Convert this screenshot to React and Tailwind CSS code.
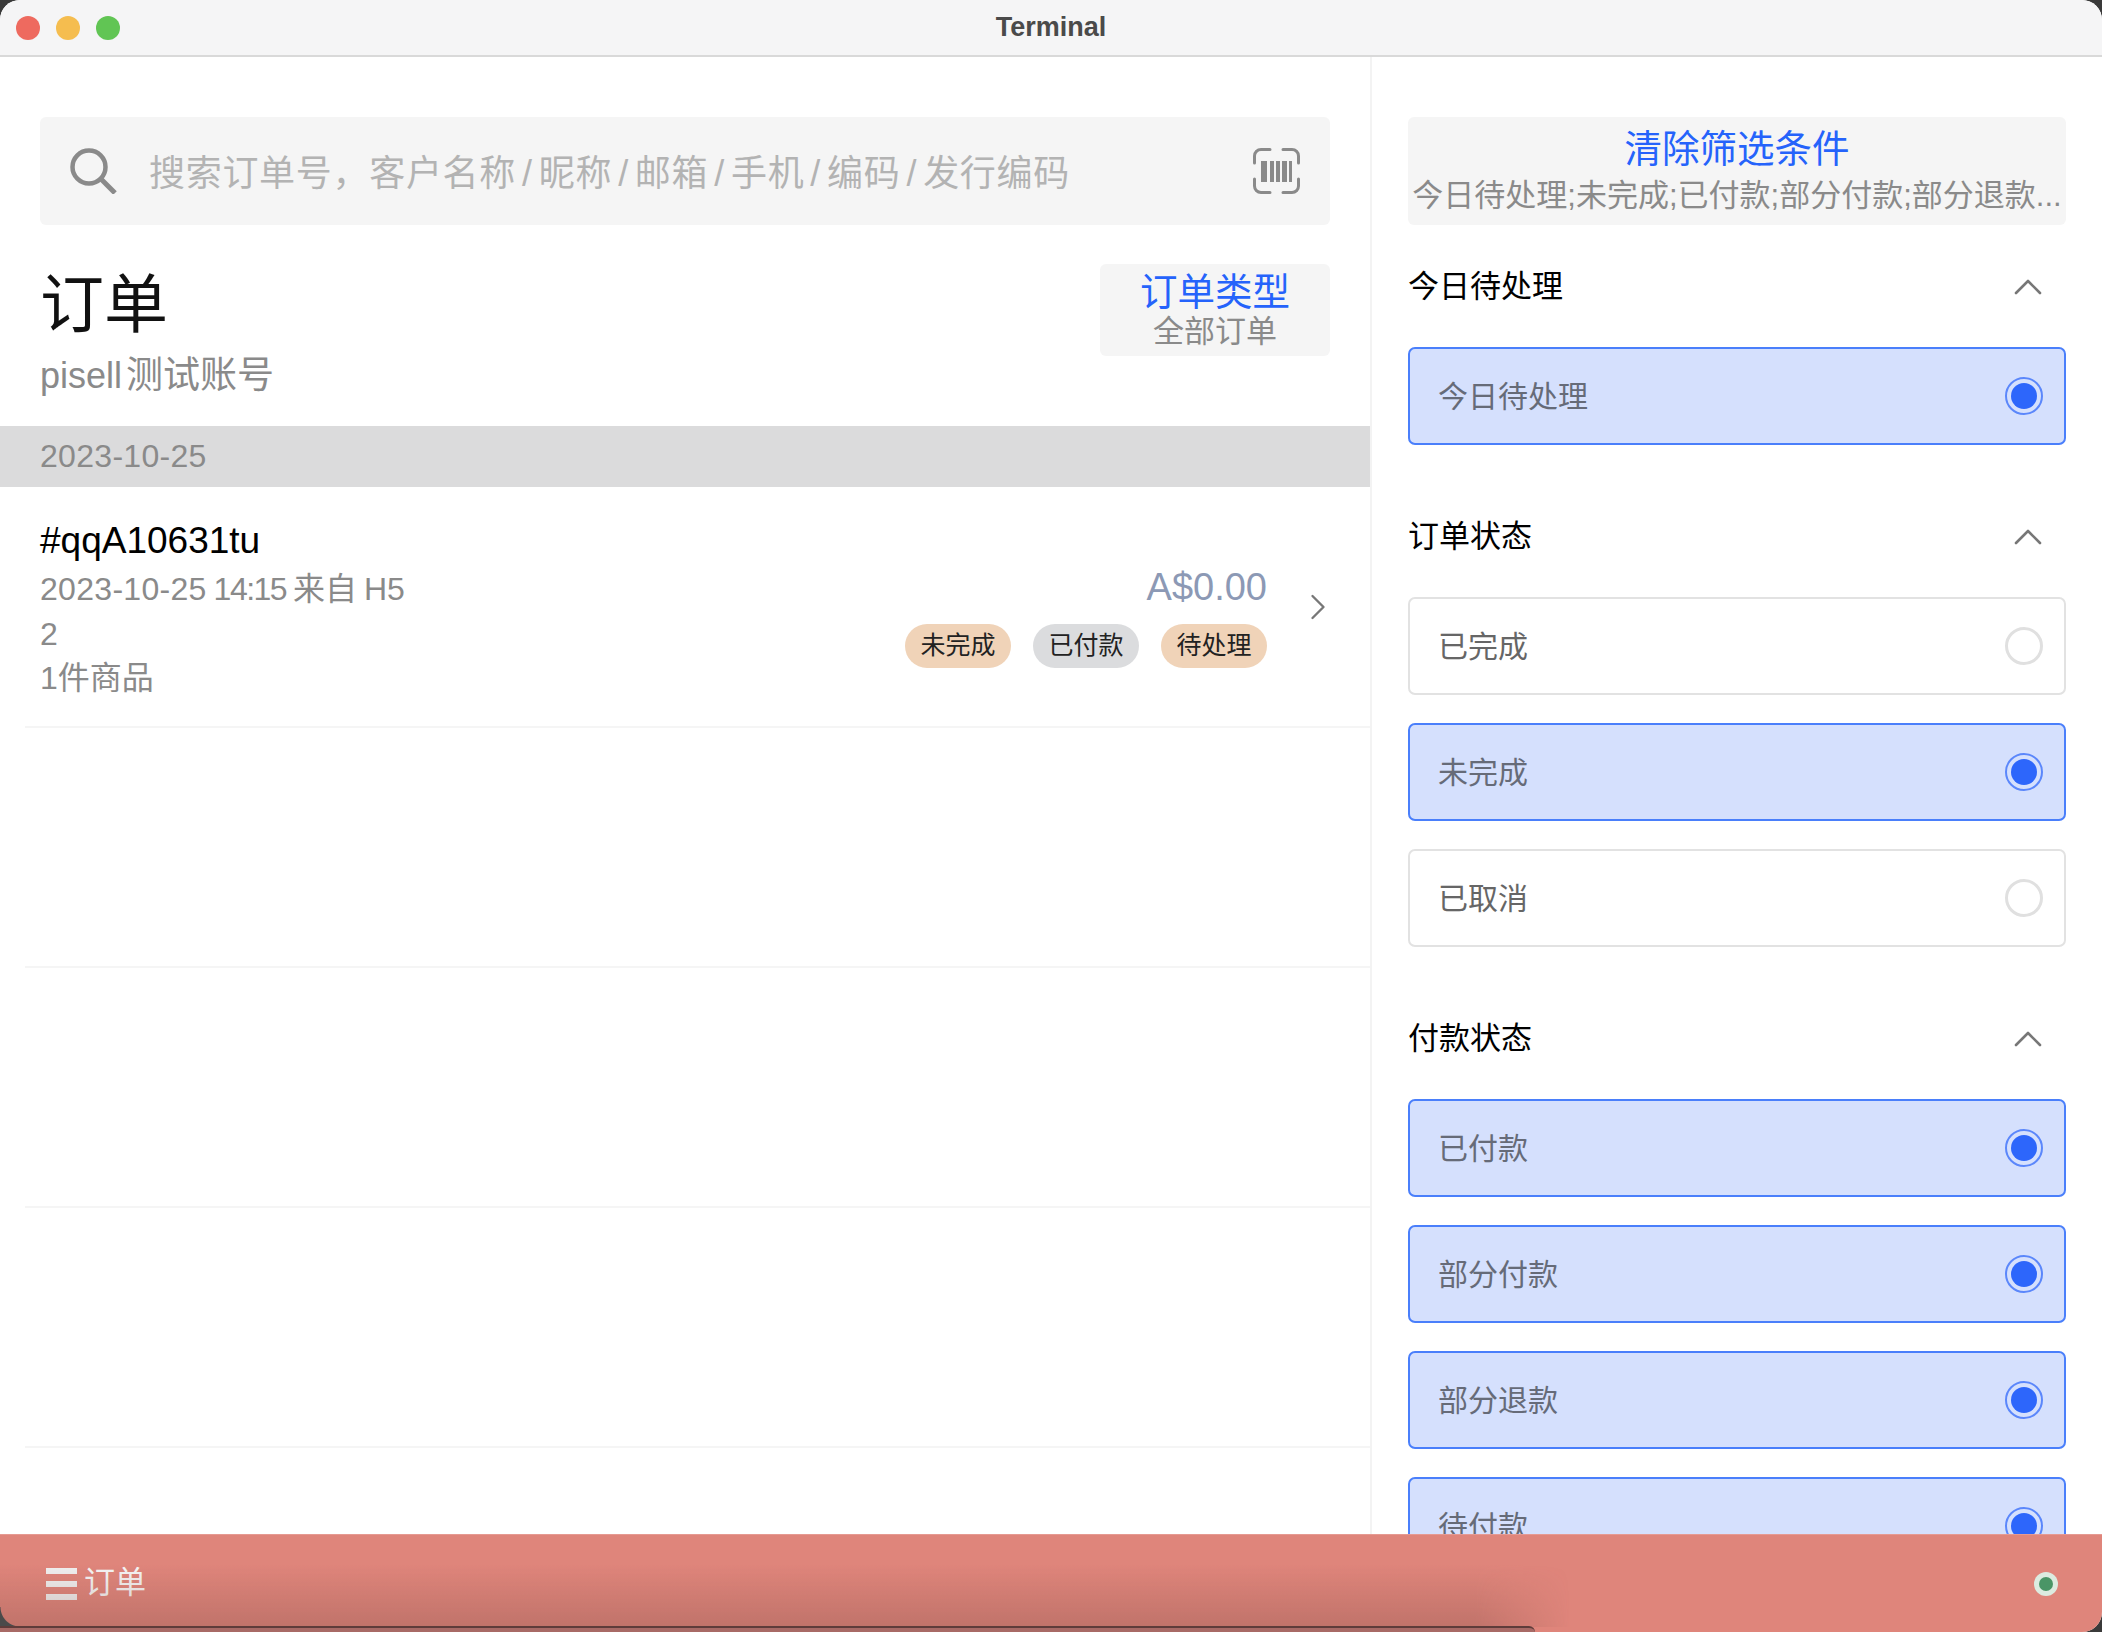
import { ChevronRight, ChevronUp } from "lucide-react"

const FONT = "font-['Liberation_Sans','Noto_Sans_CJK_SC',sans-serif]"

function SearchIcon() {
  return (
    <svg width="47" height="46" viewBox="0 0 47 46" fill="none" stroke="#8a8a8a">
      <circle cx="19" cy="19" r="16.5" strokeWidth="4.5" />
      <path d="M31 31 L45 45" strokeWidth="5" />
    </svg>
  )
}

function BarcodeIcon() {
  return (
    <svg width="47" height="46" viewBox="0 0 47 46" fill="none">
      <path d="M17 1.5H8a6.5 6.5 0 0 0-6.5 6.5V15M30 1.5H39a6.5 6.5 0 0 1 6.5 6.5V15M17 44.5H8a6.5 6.5 0 0 1-6.5-6.5V31M30 44.5H39a6.5 6.5 0 0 0 6.5-6.5V31" stroke="#8a8a8a" strokeWidth="3" strokeLinecap="round" />
      <path d="M8 13h6v21H8zM17 13h4v21h-4zM23 13h4v21h-4zM29 13h5v21h-5zM36 13h3v21h-3z" fill="#8a8a8a" />
    </svg>
  )
}

function Tag({ children, gray }) {
  return (
    <span className={`h-[44px] w-[106px] rounded-full flex items-center justify-center text-[25px] text-[#222] ${gray ? "bg-[#dbdcde]" : "bg-[#f0d3b8]"}`}>
      {children}
    </span>
  )
}

function OptionCard({ label, checked }) {
  return (
    <div className={`h-[98px] shrink-0 rounded-[7px] border-2 pl-[28px] pr-[21px] flex items-center justify-between text-[30px] ${checked ? "bg-[#d5e0fd] border-[#4a7ffb] text-[#666b78]" : "bg-white border-[#e2e2e2] text-[#666]"}`}>
      <span>{label}</span>
      {checked ? (
        <span className="w-[38px] h-[38px] rounded-full border-2 border-[#5b87fb] flex items-center justify-center">
          <span className="w-[26px] h-[26px] rounded-full bg-[#2d66fb]" />
        </span>
      ) : (
        <span className="w-[38px] h-[38px] rounded-full border-[3px] border-[#e0e0e0] bg-white" />
      )}
    </div>
  )
}

function FilterSection({ title, options }) {
  return (
    <section className="mt-[62px] first:mt-0">
      <div className="h-[60px] flex items-center justify-between pr-[14px] mb-[30px]">
        <span className="text-[31px] text-black">{title}</span>
        <ChevronUp size={48} strokeWidth={1.3} color="#777" />
      </div>
      <div className="flex flex-col gap-[28px]">
        {options.map((o) => (
          <OptionCard key={o.label} label={o.label} checked={o.checked} />
        ))}
      </div>
    </section>
  )
}

export default function App() {
  return (
    <div className={`w-[2102px] h-[1632px] bg-[#3a3a3a] overflow-hidden ${FONT}`}>
      <div className="relative w-full h-full rounded-t-[20px] rounded-br-[20px] bg-white overflow-hidden flex flex-col">

        {/* Title bar */}
        <div className="relative h-[57px] shrink-0 bg-[#f5f5f6] border-b-2 border-[#d9d9d9] flex items-center justify-center">
          <div className="absolute left-[16px] top-[16px] flex gap-[16px]">
            <span className="w-[24px] h-[24px] rounded-full bg-[#ee6a5f]" />
            <span className="w-[24px] h-[24px] rounded-full bg-[#f5bd4f]" />
            <span className="w-[24px] h-[24px] rounded-full bg-[#61c554]" />
          </div>
          <span className="text-[27px] font-bold text-[#4a4a4a]">Terminal</span>
        </div>

        <div className="flex flex-1 min-h-0">

          {/* Orders */}
          <div className="w-[1372px] shrink-0 border-r-2 border-[#f3f3f3] pt-[60px]">
            <div className="ml-[40px] mr-[40px] h-[108px] rounded-[6px] bg-[#f5f5f5] pl-[30px] pr-[30px] flex items-center">
              <SearchIcon />
              <span className="ml-[32px] pt-[5px] flex-1 text-[36px] tracking-[0.7px] text-[#b3b3b3]">
                搜索订单号，客户名称<span className="mx-[6px]">/</span>昵称<span className="mx-[6px]">/</span>邮箱<span className="mx-[6px]">/</span>手机<span className="mx-[6px]">/</span>编码<span className="mx-[6px]">/</span>发行编码
              </span>
              <BarcodeIcon />
            </div>

            <div className="ml-[40px] mr-[40px] mt-[39px] h-[162px] flex justify-between items-start">
              <div>
                <h1 className="text-[64px] leading-[80px] mt-[1px] text-[#111]">订单</h1>
                <p className="text-[36px] leading-[48px] mt-[7px] text-[#8a8a8a] [word-spacing:-6px]">pisell <span className="text-[37px]">测试账号</span></p>
              </div>
              <div className="w-[230px] h-[92px] rounded-[6px] bg-[#f5f5f5] flex flex-col items-center justify-center">
                <span className="text-[37.5px] leading-[44px] text-[#2563fb]">订单类型</span>
                <span className="text-[31px] leading-[36px] text-[#8a8a8a]">全部订单</span>
              </div>
            </div>

            <div className="h-[61px] bg-[#dbdbdc] pl-[40px] pb-[2px] flex items-center text-[32px] tracking-[0.3px] text-[#8a8a8a]">2023-10-25</div>

            <div className="ml-[25px] h-[241px] border-b-2 border-[#f5f5f5] pl-[15px] pr-[30px] flex items-center justify-between">
              <div className="pt-[3px]">
                <div className="text-[37px] leading-[52px] text-black">#qqA10631tu</div>
                <div className="text-[32px] leading-[45px] text-[#8a8a8a] [word-spacing:-2px]">
                  <span className="tracking-[0.3px]">2023-10-25</span> <span className="tracking-[-1.5px]">14:15</span> 来自 H5
                </div>
                <div className="text-[32px] leading-[44px] text-[#8a8a8a]">2</div>
                <div className="text-[32px] leading-[45px] text-[#8a8a8a]">1件商品</div>
              </div>
              <div className="flex items-center">
                <div className="pt-[19px] flex flex-col items-end gap-[15px]">
                  <span className="text-[38px] leading-[44px] text-[#8c99b5]">A$0.00</span>
                  <div className="flex gap-[22px]">
                    <Tag>未完成</Tag>
                    <Tag gray>已付款</Tag>
                    <Tag>待处理</Tag>
                  </div>
                </div>
                <ChevronRight size={44} strokeWidth={1.3} color="#777" className="ml-[29px]" />
              </div>
            </div>
            <div className="ml-[25px] h-[240px] border-b-2 border-[#f5f5f5]" />
            <div className="ml-[25px] h-[240px] border-b-2 border-[#f5f5f5]" />
            <div className="ml-[25px] h-[240px] border-b-2 border-[#f5f5f5]" />
          </div>

          {/* Filters */}
          <div className="flex-1 min-w-0 pt-[60px] pl-[36px] pr-[36px] overflow-hidden">
            <div className="h-[108px] rounded-[6px] bg-[#f5f5f5] flex flex-col items-center justify-center">
              <span className="text-[37.5px] leading-[50px] text-[#2563fb]">清除筛选条件</span>
              <span className="whitespace-nowrap text-[31px] leading-[44px] text-[#8a8a8a]">今日待处理;未完成;已付款;部分付款;部分退款...</span>
            </div>
            <div className="mt-[32px]">
              <FilterSection title="今日待处理" options={[{ label: "今日待处理", checked: true }]} />
              <FilterSection title="订单状态" options={[
                { label: "已完成" },
                { label: "未完成", checked: true },
                { label: "已取消" },
              ]} />
              <FilterSection title="付款状态" options={[
                { label: "已付款", checked: true },
                { label: "部分付款", checked: true },
                { label: "部分退款", checked: true },
                { label: "待付款", checked: true },
              ]} />
            </div>
          </div>
        </div>

        {/* Bottom bar */}
        <div className="absolute left-0 right-0 bottom-0 h-[98px] bg-[#df857b] border-t border-[#e69a92] pl-[46px] pr-[44px] flex items-center justify-between">
          <div className="flex items-center gap-[7px] text-[31px] text-[#f5f5f5]">
            <span className="w-[31px] flex flex-col gap-[7px]">
              <span className="h-[6px] bg-[#f0f0f0]" />
              <span className="h-[6px] bg-[#f0f0f0]" />
              <span className="h-[6px] bg-[#f0f0f0]" />
            </span>
            订单
          </div>
          <span className="w-[24px] h-[24px] rounded-full bg-[#dcebe0] flex items-center justify-center">
            <span className="w-[14px] h-[14px] rounded-full bg-[#4a9566]" />
          </span>
        </div>

        {/* Shadow of the window behind, over the bottom bar */}
        <div className="absolute left-0 bottom-[5px] w-[1570px] h-[62px] bg-gradient-to-t from-[#7a4a44]/30 to-transparent [mask-image:linear-gradient(to_right,black_94%,transparent)]" />
        <div className="absolute left-0 bottom-[5px] w-[20px] h-[20px] bg-[radial-gradient(circle_at_100%_0,transparent_19px,#4a4a4a_20px)]" />
        <div className="absolute left-0 bottom-0 w-[1535px] h-[6px] bg-[#a86a66] border-t-2 border-[#5e3c3a] rounded-tr-[8px]" />
      </div>
    </div>
  )
}
